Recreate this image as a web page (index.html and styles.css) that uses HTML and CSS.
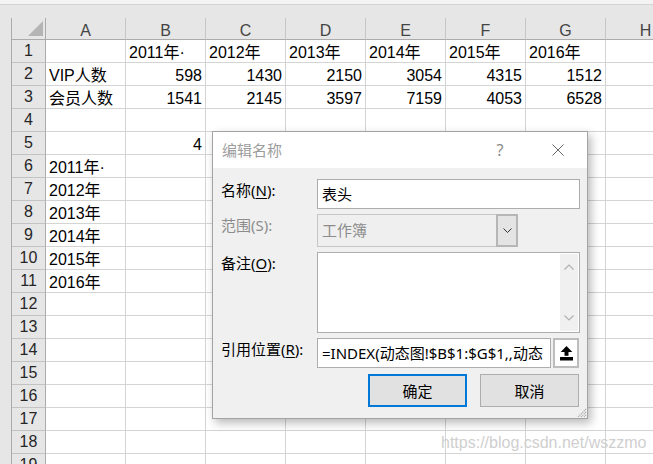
FILE: index.html
```html
<!DOCTYPE html>
<html lang="zh-CN">
<head>
<meta charset="utf-8">
<title>编辑名称</title>
<link rel="stylesheet" href="styles.css">
</head>
<body>
<div class="topstrip"></div>
<div class="gap"></div>
<div class="sheet">
  <div class="grid">
    <div class="corner"><span class="tri"></span></div>
    <div class="ch">A</div><div class="ch">B</div><div class="ch">C</div><div class="ch">D</div><div class="ch">E</div><div class="ch">F</div><div class="ch">G</div><div class="ch">H</div>

    <div class="rh">1</div><div class="c"></div><div class="c">2011年·</div><div class="c">2012年</div><div class="c">2013年</div><div class="c">2014年</div><div class="c">2015年</div><div class="c">2016年</div><div class="c"></div>
    <div class="rh">2</div><div class="c">VIP人数</div><div class="c n">598</div><div class="c n">1430</div><div class="c n">2150</div><div class="c n">3054</div><div class="c n">4315</div><div class="c n">1512</div><div class="c"></div>
    <div class="rh">3</div><div class="c">会员人数</div><div class="c n">1541</div><div class="c n">2145</div><div class="c n">3597</div><div class="c n">7159</div><div class="c n">4053</div><div class="c n">6528</div><div class="c"></div>
    <div class="rh">4</div><div class="c"></div><div class="c"></div><div class="c"></div><div class="c"></div><div class="c"></div><div class="c"></div><div class="c"></div><div class="c"></div>
    <div class="rh">5</div><div class="c"></div><div class="c n">4</div><div class="c"></div><div class="c"></div><div class="c"></div><div class="c"></div><div class="c"></div><div class="c"></div>
    <div class="rh">6</div><div class="c">2011年·</div><div class="c"></div><div class="c"></div><div class="c"></div><div class="c"></div><div class="c"></div><div class="c"></div><div class="c"></div>
    <div class="rh">7</div><div class="c">2012年</div><div class="c"></div><div class="c"></div><div class="c"></div><div class="c"></div><div class="c"></div><div class="c"></div><div class="c"></div>
    <div class="rh">8</div><div class="c">2013年</div><div class="c"></div><div class="c"></div><div class="c"></div><div class="c"></div><div class="c"></div><div class="c"></div><div class="c"></div>
    <div class="rh">9</div><div class="c">2014年</div><div class="c"></div><div class="c"></div><div class="c"></div><div class="c"></div><div class="c"></div><div class="c"></div><div class="c"></div>
    <div class="rh">10</div><div class="c">2015年</div><div class="c"></div><div class="c"></div><div class="c"></div><div class="c"></div><div class="c"></div><div class="c"></div><div class="c"></div>
    <div class="rh">11</div><div class="c">2016年</div><div class="c"></div><div class="c"></div><div class="c"></div><div class="c"></div><div class="c"></div><div class="c"></div><div class="c"></div>
    <div class="rh">12</div><div class="c"></div><div class="c"></div><div class="c"></div><div class="c"></div><div class="c"></div><div class="c"></div><div class="c"></div><div class="c"></div>
    <div class="rh">13</div><div class="c"></div><div class="c"></div><div class="c"></div><div class="c"></div><div class="c"></div><div class="c"></div><div class="c"></div><div class="c"></div>
    <div class="rh">14</div><div class="c"></div><div class="c"></div><div class="c"></div><div class="c"></div><div class="c"></div><div class="c"></div><div class="c"></div><div class="c"></div>
    <div class="rh">15</div><div class="c"></div><div class="c"></div><div class="c"></div><div class="c"></div><div class="c"></div><div class="c"></div><div class="c"></div><div class="c"></div>
    <div class="rh">16</div><div class="c"></div><div class="c"></div><div class="c"></div><div class="c"></div><div class="c"></div><div class="c"></div><div class="c"></div><div class="c"></div>
    <div class="rh">17</div><div class="c"></div><div class="c"></div><div class="c"></div><div class="c"></div><div class="c"></div><div class="c"></div><div class="c"></div><div class="c"></div>
    <div class="rh">18</div><div class="c"></div><div class="c"></div><div class="c"></div><div class="c"></div><div class="c"></div><div class="c"></div><div class="c"></div><div class="c"></div>
    <div class="rh">19</div><div class="c"></div><div class="c"></div><div class="c"></div><div class="c"></div><div class="c"></div><div class="c"></div><div class="c"></div><div class="c"></div>
  </div>
</div>

<div class="dialog">
  <div class="dtitle">
    <span class="ttext">编辑名称</span>
    <span class="help">?</span>
    <svg class="close" width="12" height="12" viewBox="0 0 12 12"><path d="M0.5 0.5 L11.5 11.5 M11.5 0.5 L0.5 11.5" stroke="#6b6b6b" stroke-width="1" fill="none"/></svg>
  </div>
  <div class="dbody">
    <div class="lbl">名称(<u>N</u>):</div>
    <div class="inp">表头</div>

    <div class="lbl dis">范围(S):</div>
    <div class="sel">
      <span class="val">工作簿</span>
      <span class="selbtn"><svg width="9" height="5" viewBox="0 0 9 5"><path d="M0.5 0.5 L4.5 4.5 L8.5 0.5" stroke="#333" stroke-width="1" fill="none"/></svg></span>
    </div>

    <div class="lbl">备注(<u>O</u>):</div>
    <div class="memo">
      <div class="sb">
        <svg width="10" height="6" viewBox="0 0 10 6"><path d="M0.5 5.5 L5 1 L9.5 5.5" stroke="#b0b0b0" stroke-width="1.2" fill="none"/></svg>
        <svg width="10" height="6" viewBox="0 0 10 6"><path d="M0.5 0.5 L5 5 L9.5 0.5" stroke="#b0b0b0" stroke-width="1.2" fill="none"/></svg>
      </div>
    </div>

    <div class="lbl">引用位置(<u>R</u>):</div>
    <div class="refrow">
      <div class="inp refinp">=INDEX(动态图!$B$1:$G$1,,动态</div>
      <div class="refbtn"><svg width="13" height="15" viewBox="0 0 13 15"><polygon points="6.5,0 0.7,6 12.3,6" fill="#000"/><rect x="4.5" y="5.5" width="4" height="4.3" fill="#000"/><rect x="0" y="11" width="13" height="3.5" fill="#000"/></svg></div>
    </div>

    <div class="btns">
      <div class="btn primary">确定</div>
      <div class="btn">取消</div>
    </div>
  </div>
  <svg class="grip" width="12" height="12" viewBox="0 0 12 12"><path d="M11 3 L3 11 M11 6 L6 11 M11 9 L9 11" stroke="#a8a8a8" stroke-width="1.2" stroke-dasharray="1.2 0.8" fill="none"/></svg>
</div>

<div class="watermark">https://blog.csdn.net/wszzmo</div>
</body>
</html>
```
FILE: styles.css
```css
* { box-sizing: border-box; }
html, body { margin: 0; padding: 0; }
body {
  width: 653px;
  height: 464px;
  overflow: hidden;
  position: relative;
  background: #e6e6e6;
  font-family: "Liberation Sans", "Noto Sans CJK SC", sans-serif;
}
.topstrip {
  height: 5px;
  background: #f3f3f3;
  border-bottom: 1px solid #d3d3d3;
}
.gap { height: 13px; }
.sheet {
  display: flex;
  padding-left: 11px;
}
.grid {
  flex: none;
  display: grid;
  grid-template-columns: 34px repeat(8, 80px);
  grid-template-rows: 22px repeat(19, 23px);
  border-left: 1px solid #ababab;
  background: #fff;
}
.c {
  border-right: 1px solid #d4d4d4;
  border-bottom: 1px solid #d4d4d4;
  font-size: 16px;
  line-height: 20px;
  padding: 3px 3px 0 3px;
  white-space: nowrap;
  color: #000;
}
.n { text-align: right; }
.ch {
  background: #e6e6e6;
  border-right: 1px solid #c6c6c6;
  border-bottom: 1px solid #ababab;
  text-align: center;
  color: #444;
  font-size: 16px;
  line-height: 19px;
  padding-top: 3px;
}
.rh {
  background: #e6e6e6;
  border-right: 1px solid #ababab;
  border-bottom: 1px solid #c3c3c3;
  text-align: center;
  color: #262626;
  font-size: 16px;
  line-height: 22px;
  padding-top: 0;
}
.corner {
  background: #e6e6e6;
  border-right: 1px solid #ababab;
  border-bottom: 1px solid #ababab;
  display: flex;
  justify-content: flex-end;
  align-items: flex-end;
  padding: 0 2px 3px 0;
}
.tri {
  width: 0;
  height: 0;
  border-left: 15px solid transparent;
  border-bottom: 15px solid #b4b4b4;
}

/* dialog */
.dialog {
  position: absolute;
  left: 212px;
  top: 131px;
  width: 376px;
  height: 288px;
  border: 1px solid #a3a3a3;
  background: #f0f0f0;
  box-shadow: 3px 4px 9px rgba(0, 0, 0, 0.28);
  font-family: "Noto Sans", "Noto Sans CJK SC", sans-serif;
  font-size: 15px;
  display: flex;
  flex-direction: column;
}
.dtitle {
  height: 36px;
  flex: none;
  background: #fff;
  display: flex;
  align-items: center;
  padding-left: 9px;
  color: #9c9c9c;
}
.ttext { flex: 1; line-height: 20px; }
.help {
  width: 20px;
  text-align: center;
  margin-right: 42px;
  color: #8a8a8a;
  font-size: 16px;
  line-height: 20px;
}
.close { margin-right: 23px; }
.dbody {
  padding: 11px 7px 0 8px;
  display: grid;
  grid-template-columns: 96px minmax(0, 1fr);
  grid-template-rows: 30px 33px 81px 30px 33px;
  row-gap: 5px;
  min-width: 0;
}
.lbl {
  line-height: 20px;
  padding-top: 1px;
  color: #000;
  white-space: nowrap;
}
.lbl u { text-underline-offset: 2px; }
.lbl.dis { color: #8c8c8c; }
.inp {
  background: #fff;
  border: 1px solid #adadad;
  padding: 0 4px;
  line-height: 28px;
  white-space: nowrap;
  overflow: hidden;
  color: #000;
  min-width: 0;
}
.sel {
  display: flex;
  width: 201px;
  border: 1px solid #c6c6c6;
  background: #efefef;
  color: #8c8c8c;
}
.sel .val {
  flex: 1;
  padding-left: 4px;
  line-height: 31px;
}
.selbtn {
  width: 22px;
  margin: -1px -1px -1px 0;
  border: 2px solid #b6b6b6;
  background: #e4e4e4;
  display: flex;
  align-items: center;
  justify-content: center;
}
.memo {
  background: #fff;
  border: 1px solid #adadad;
  display: flex;
  justify-content: flex-end;
  padding: 1px;
}
.sb {
  width: 18px;
  background: #f0f0f0;
  display: flex;
  flex-direction: column;
  justify-content: space-between;
  align-items: center;
  padding: 10px 0 10px;
}
.refrow {
  display: flex;
  gap: 2px;
  padding-right: 1px;
  min-width: 0;
}
.refinp { flex: 1; padding-left: 4px; }
.refbtn {
  flex: none;
  width: 26px;
  border: 2px solid #bdbdbd;
  background: #fff;
  display: flex;
  align-items: center;
  justify-content: center;
}
.btns {
  grid-column: 1 / 3;
  display: flex;
  justify-content: flex-end;
  gap: 13px;
  margin-top: 1px;
  padding-right: 1px;
}
.btn {
  width: 99px;
  height: 33px;
  background: #e1e1e1;
  border: 1px solid #adadad;
  display: flex;
  align-items: center;
  justify-content: center;
  color: #000;
  line-height: 20px;
}
.btn.primary { border: 2px solid #0078d7; }
.grip {
  position: absolute;
  right: 0;
  bottom: 0;
}
.watermark {
  position: absolute;
  left: 441px;
  top: 434px;
  font-family: "Liberation Sans", sans-serif;
  font-size: 16px;
  line-height: 18px;
  color: #cfcfcf;
  white-space: nowrap;
}
```
